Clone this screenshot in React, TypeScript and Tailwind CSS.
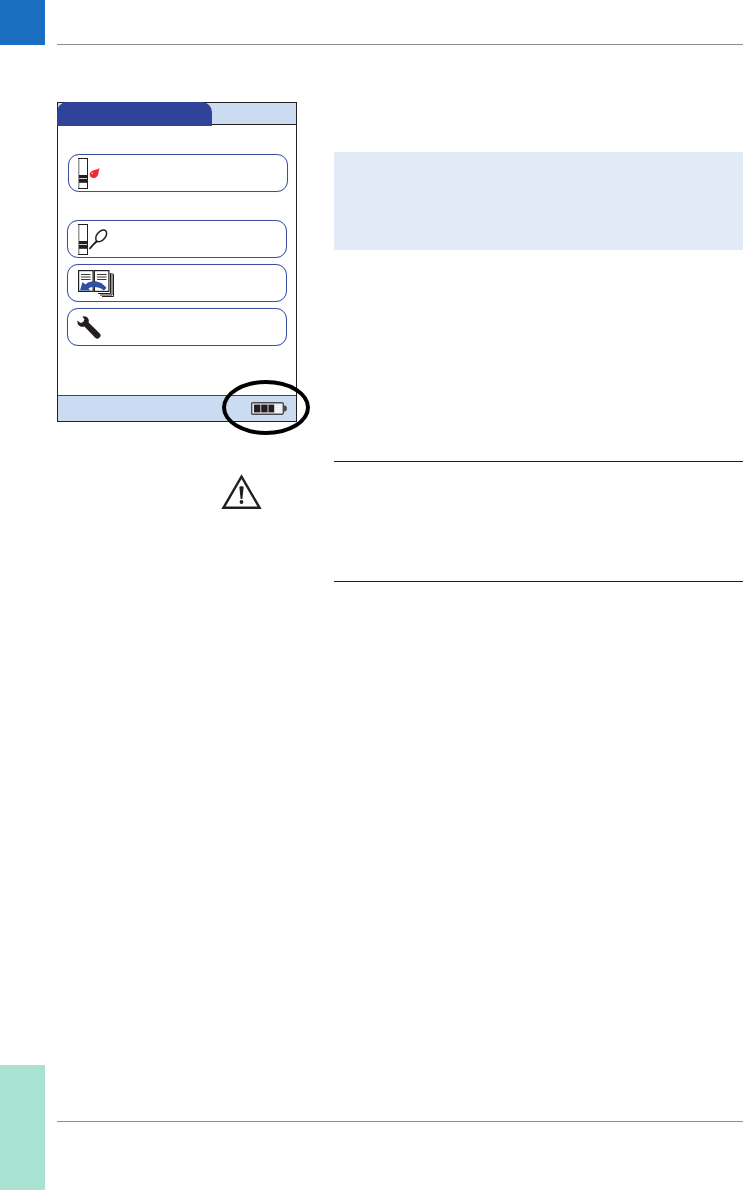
function StripIcon() {
  return (
    <svg width="10" height="31" viewBox="0 0 10 31" className="shrink-0">
      <rect x="0.5" y="0.5" width="9" height="30" fill="#fff" stroke="#231f20" />
      <rect x="0" y="1" width="1.5" height="29" fill="#9a9a9a" />
      <rect x="1" y="17" width="8" height="3" fill="#231f20" />
      <rect x="1" y="20.8" width="8" height="4" fill="#231f20" />
    </svg>
  );
}

function BloodDrop() {
  return (
    <svg width="11" height="11" viewBox="0 0 11 11" className="ml-[1px] shrink-0">
      <path d="M10.5 0.3 C9.5 3.5 9.8 5.5 8.6 7.8 C7.2 10.4 3.6 10.8 1.7 9 C0 7.3 0.3 4.6 2.5 3.2 C4.6 1.9 7.5 2 10.5 0.3 Z" fill="#ee2a35" />
      <circle cx="3.2" cy="5.2" r="0.9" fill="#f9a8ad" />
    </svg>
  );
}

function Swab() {
  return (
    <svg width="20" height="23" viewBox="0 0 20 23" className="shrink-0">
      <ellipse cx="13.2" cy="7.8" rx="4.2" ry="6.8" transform="rotate(40 13.2 7.8)" fill="#fff" stroke="#231f20" strokeWidth="1.5" />
      <path d="M8.6 13 L1.5 20.8" stroke="#231f20" strokeWidth="1.8" fill="none" />
      <path d="M9.4 14 L4.5 17.2" stroke="#231f20" strokeWidth="0.9" fill="none" />
    </svg>
  );
}

function BooksIcon() {
  return (
    <svg width="36" height="28" viewBox="0 0 36 28" className="mt-[1px] shrink-0">
      <path d="M20 23.5 H32.5 V3 M22 25 H34 V3 M24 26.5 H35.5 V4" fill="none" stroke="#231f20" strokeWidth="1" />
      <rect x="0.6" y="0.6" width="14.5" height="20.8" fill="#fff" stroke="#231f20" strokeWidth="1.2" />
      <rect x="16.4" y="0.6" width="14.5" height="20.8" fill="#fff" stroke="#231f20" strokeWidth="1.2" />
      <path d="M3 4.5 H12.5 M3 7 H12.5 M3 9.5 H12.5 M19 4.5 H28.5 M19 7 H28.5 M19 9.5 H28.5" stroke="#231f20" strokeWidth="0.9" />
      <path d="M2 20.5 L4.5 12 L7.4 14.4 C13 9.6 22.5 10 28.5 18 L25.8 20.4 C21 16.6 14.5 16.2 10.4 18.4 L12.6 20.6 Z" fill="#2e4fa3" />
    </svg>
  );
}

function WrenchIcon() {
  return (
    <svg width="24" height="23" viewBox="0 0 24 23" className="shrink-0">
      <path
        d="M5.4 0.2 L8.8 0.4 C11 1.4 12.2 3.4 11.8 5.6 L11.6 6.6 L22.8 17.4 C24 18.6 24 20 22.9 21.2 L22 22 C20.8 23.1 19.4 23 18.2 21.8 L7.4 10.6 C4.6 11.4 1.6 10.2 0.6 7.4 L0.4 4.4 L3.4 7 L6.2 6 L7.4 3.4 Z"
        fill="#231f20"
      />
    </svg>
  );
}

function BatteryIcon() {
  return (
    <svg width="36" height="13" viewBox="0 0 36 13" className="shrink-0">
      <rect x="0.7" y="0.7" width="31.6" height="11.6" rx="1.2" fill="#eef2fa" stroke="#4a4a4a" strokeWidth="1.4" />
      <path d="M33 3.6 H34.4 L35.8 5 V8 L34.4 9.4 H33 Z" fill="#4a4a4a" />
      <rect x="3" y="2.6" width="6.4" height="7.8" fill="#231f20" />
      <rect x="10.2" y="2.6" width="6.4" height="7.8" fill="#231f20" />
      <rect x="17.4" y="2.6" width="5.8" height="7.8" fill="#231f20" />
    </svg>
  );
}

function WarningIcon() {
  return (
    <svg width="42" height="38" viewBox="0 0 42 38" className="ml-[164px] mt-[52px]">
      <path d="M20.5 2.6 L38.6 33.8 H2.4 Z" fill="#fff" stroke="#231f20" strokeWidth="2.4" strokeLinejoin="miter" />
      <path d="M18.4 13.4 C18.4 12 22.6 12 22.6 13.4 L21.4 25 H19.6 Z" fill="#231f20" />
      <circle cx="20.5" cy="28" r="1.9" fill="#231f20" />
    </svg>
  );
}

function MenuButton({ className, children }: { className: string; children: React.ReactNode }) {
  return (
    <div className={`flex h-[38px] w-[220px] items-center rounded-[11px] border border-[#3a4f9f] bg-white shadow-[0_0_1px_#c9d4ee] ${className}`}>
      {children}
    </div>
  );
}

function DeviceScreen() {
  return (
    <div className="relative flex h-[320px] w-[240px] flex-col border border-[#231f20] bg-white">
      {/* Title bar */}
      <div className="flex h-[22px] shrink-0 border-b border-[#231f20] bg-[#cbdcf2]">
        <div className="-ml-px -mt-px h-[24px] w-[155px] rounded-t-[10px] bg-[#30439a]" />
      </div>

      {/* Menu */}
      <div className="flex flex-1 flex-col pt-[29px]">
        <MenuButton className="ml-[10px] pl-[9px] pt-[1px]">
          <StripIcon />
          <BloodDrop />
        </MenuButton>
        <MenuButton className="ml-[9px] mt-[28px] pl-[10px]">
          <StripIcon />
          <Swab />
        </MenuButton>
        <MenuButton className="ml-[9px] mt-[6px] pl-[10px]">
          <BooksIcon />
        </MenuButton>
        <MenuButton className="ml-[9px] mt-[6px] items-start pl-[9px] pt-[7px]">
          <WrenchIcon />
        </MenuButton>
      </div>

      {/* Status bar */}
      <div className="flex h-[26px] shrink-0 items-center justify-end border-t border-[#30439a] bg-[#cbdcf2] pr-[9px]">
        <BatteryIcon />
      </div>

      {/* Marker round the battery */}
      <div className="absolute left-[164px] top-[277px] h-[55px] w-[88px] rounded-[50%] border-4 border-black" />
    </div>
  );
}

export default function App() {
  return (
    <div className="flex h-[1190px] w-[743px] overflow-hidden bg-white">
      {/* Side tabs */}
      <div className="flex w-[45px] shrink-0 flex-col justify-between">
        <div className="h-[45px] bg-[#1a6fc1]" />
        <div className="h-[125px] bg-[#a9e2d0]" />
      </div>

      <div className="flex flex-1 flex-col pl-[12px]">
        <div className="h-[45px] shrink-0 border-b border-[#8c8c8c]" />

        <div className="flex flex-1 pt-[57px]">
          <div className="w-[277px] shrink-0">
            <DeviceScreen />
            <WarningIcon />
          </div>

          <div className="flex-1">
            <div className="mt-[50px] h-[98px] bg-[#e2e9f7]" />
            <div className="mt-[211px] h-[121px] border-y border-[#231f20]" />
          </div>
        </div>

        <div className="h-[69px] shrink-0 border-t border-[#8c8c8c]" />
      </div>
    </div>
  );
}
